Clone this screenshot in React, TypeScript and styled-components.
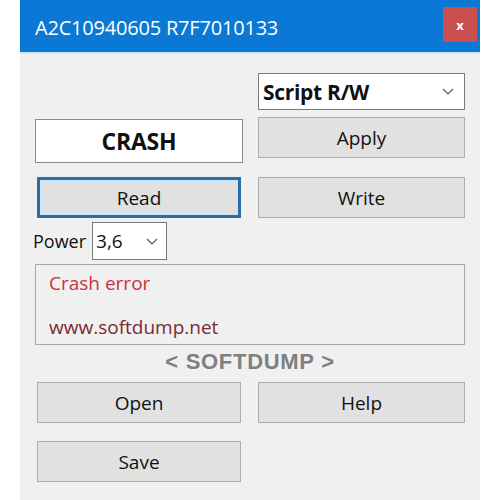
import * as React from "react";
import styled, { createGlobalStyle } from "styled-components";

const GlobalStyle = createGlobalStyle`
  html, body {
    margin: 0;
    padding: 0;
    background: #ffffff;
  }
  body {
    font-family: "Open Sans", "Noto Sans", sans-serif;
  }
`;

const Window = styled.div`
  margin-left: 20px;
  width: 460px;
  height: 500px;
  background: #f0f0f0;
  display: flex;
  flex-direction: column;
  overflow: hidden;
`;

const TitleBar = styled.div`
  height: 54px;
  background: #0a78d4;
  border-bottom: 2px solid #c9e6fb;
  display: flex;
  align-items: center;
  justify-content: space-between;
  padding: 0 3px 0 15px;
  box-sizing: border-box;
`;

const Title = styled.div`
  color: #ffffff;
  font-size: 20px;
  margin-top: 2px;
  letter-spacing: -0.2px;
`;

const CloseButton = styled.div`
  width: 34px;
  height: 35px;
  background: #c9504f;
  color: #ffffff;
  font-weight: bold;
  font-size: 13px;
  display: flex;
  align-items: center;
  justify-content: center;
  margin-top: -3px;
`;

const Body = styled.div`
  display: flex;
  flex-direction: column;
  padding: 19px 15px 0 15px;
`;

const Row = styled.div<{ $top?: number; $height: number }>`
  display: grid;
  grid-template-columns: 208px 207px;
  column-gap: 15px;
  margin-top: ${(p) => p.$top ?? 0}px;
  height: ${(p) => p.$height}px;
  align-items: start;
`;

const Combo = styled.div<{ $bold?: boolean }>`
  height: 37px;
  box-sizing: border-box;
  background: #ffffff;
  border: 1px solid #7a7a7a;
  display: flex;
  align-items: center;
  justify-content: space-between;
  padding: 0 10px 0 4px;
  font-size: ${(p) => (p.$bold ? 21 : 19)}px;
  font-weight: ${(p) => (p.$bold ? "bold" : "normal")};
  letter-spacing: ${(p) => (p.$bold ? "-0.3px" : "0")};
  color: #111;
`;

const Chevron = () => (
  <svg width="12" height="7" viewBox="0 0 12 7">
    <polyline points="1,1 6,6 11,1" fill="none" stroke="#5a5a5a" strokeWidth="1.2" />
  </svg>
);

const StatusBox = styled.div`
  margin-top: 2px;
  height: 44px;
  box-sizing: border-box;
  background: #ffffff;
  border: 1px solid #8a8a8a;
  display: flex;
  align-items: center;
  justify-content: center;
  font-size: 23px;
  font-weight: bold;
  letter-spacing: -0.2px;
  color: #111;
`;

const Button = styled.div<{ $focused?: boolean; $inset?: number }>`
  height: 41px;
  margin: 0 ${(p) => p.$inset ?? 2}px;
  box-sizing: border-box;
  background: #e1e1e1;
  border: ${(p) => (p.$focused ? "3px solid #2b6da6" : "1px solid #adadad")};
  box-shadow: ${(p) => (p.$focused ? "inset 0 0 0 1px #c6e4f7" : "none")};
  display: flex;
  align-items: center;
  justify-content: center;
  font-size: 19px;
  color: #111;
`;

const PowerRow = styled.div`
  margin-top: 4px;
  height: 38px;
  display: flex;
  align-items: center;
  gap: 6px;
  font-size: 18px;
  color: #111;
`;

const PowerLabel = styled.span`
  margin-left: -2px;
`;

const SmallCombo = styled(Combo)`
  width: 75px;
  height: 38px;
  padding: 0 8px 0 3px;
`;

const MessageBox = styled.div`
  margin-top: 4px;
  height: 81px;
  box-sizing: border-box;
  border: 1px solid #a8a8a8;
  padding: 5px 13px 4px;
  display: flex;
  flex-direction: column;
  justify-content: space-between;
  font-size: 19px;
`;

const MessageLine = styled.div<{ $color: string }>`
  color: ${(p) => p.$color};
`;

const Brand = styled.div`
  height: 37px;
  display: flex;
  align-items: center;
  justify-content: center;
  font-family: "Liberation Sans", Arial, sans-serif;
  font-weight: bold;
  font-size: 22px;
  color: #7f7f7f;
  letter-spacing: 0.7px;
  padding-bottom: 4px;
  box-sizing: border-box;
`;

export default function App() {
  return (
    <>
      <GlobalStyle />
      <Window>
        <TitleBar>
          <Title>A2C10940605 R7F7010133</Title>
          <CloseButton>x</CloseButton>
        </TitleBar>
        <Body>
          <Row $height={37}>
            <div />
            <Combo $bold>
              Script R/W
              <Chevron />
            </Combo>
          </Row>
          <Row $top={7} $height={46}>
            <StatusBox>CRASH</StatusBox>
            <Button $inset={0}>Apply</Button>
          </Row>
          <Row $top={14} $height={41}>
            <Button $focused>Read</Button>
            <Button $inset={0}>Write</Button>
          </Row>
          <PowerRow>
            <PowerLabel>Power</PowerLabel>
            <SmallCombo>
              3,6
              <Chevron />
            </SmallCombo>
          </PowerRow>
          <MessageBox>
            <MessageLine $color="#cc3140">Crash error</MessageLine>
            <MessageLine $color="#7a2a33">www.softdump.net</MessageLine>
          </MessageBox>
          <Brand>&lt; SOFTDUMP &gt;</Brand>
          <Row $height={41}>
            <Button>Open</Button>
            <Button $inset={0}>Help</Button>
          </Row>
          <Row $top={18} $height={41}>
            <Button>Save</Button>
          </Row>
        </Body>
      </Window>
    </>
  );
}
